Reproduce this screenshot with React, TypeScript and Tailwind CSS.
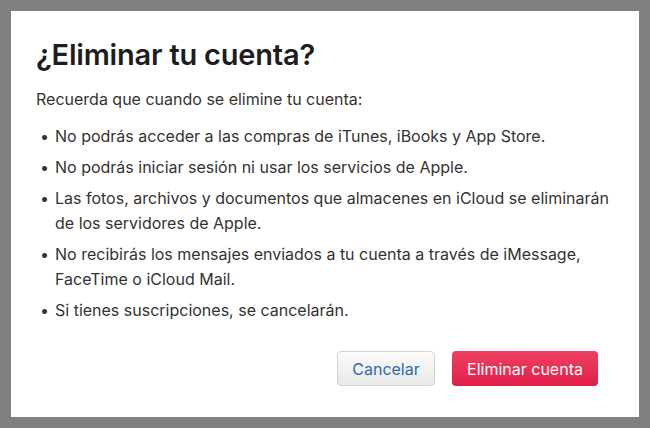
export default function App() {
  const items: string[][] = [
    ["No podrás acceder a las compras de iTunes, iBooks y App Store."],
    ["No podrás iniciar sesión ni usar los servicios de Apple."],
    ["Las fotos, archivos y documentos que almacenes en iCloud se eliminarán", "de los servidores de Apple."],
    ["No recibirás los mensajes enviados a tu cuenta a través de iMessage,", "FaceTime o iCloud Mail."],
    ["Si tienes suscripciones, se cancelarán."],
  ];
  return (
    <div className="w-[650px] h-[428px] bg-[#808080] p-[11px]" style={{ fontFamily: "Inter, 'Noto Sans', sans-serif" }}>
      <div className="w-[628px] h-[406px] bg-white flex flex-col pl-[25px] pr-[20px] pt-[26px]">
        <h1 className="text-[29px] leading-[36px] font-semibold text-[#1d1d1f] tracking-[-0.2px]">¿Eliminar tu cuenta?</h1>
        <p className="mt-[15px] text-[16px] leading-[22px] text-[#333]">Recuerda que cuando se elimine tu cuenta:</p>
        <ul className="mt-[14px] flex flex-col gap-[6px] text-[16px] leading-[25px] text-[#333] whitespace-nowrap">
          {items.map((lines, i) => (
            <li key={i} className="flex">
              <span className="w-[19px] pl-[4px] shrink-0">•</span>
              <span>
                {lines.map((l, j) => (
                  <span key={j} className="block">{l}</span>
                ))}
              </span>
            </li>
          ))}
        </ul>
        <div className="mt-[28px] pr-[21px] flex justify-end gap-[17px]">
          <button className="w-[98px] h-[35px] rounded-[4px] border border-[#d4d4d4] bg-gradient-to-b from-[#fbfbfb] to-[#e8e8e8] text-[#2a6bb3] text-[16px]">Cancelar</button>
          <button className="w-[146px] h-[35px] rounded-[4px] bg-gradient-to-b from-[#ee3f62] to-[#e01d4a] text-white text-[16px]">Eliminar cuenta</button>
        </div>
      </div>
    </div>
  );
}
